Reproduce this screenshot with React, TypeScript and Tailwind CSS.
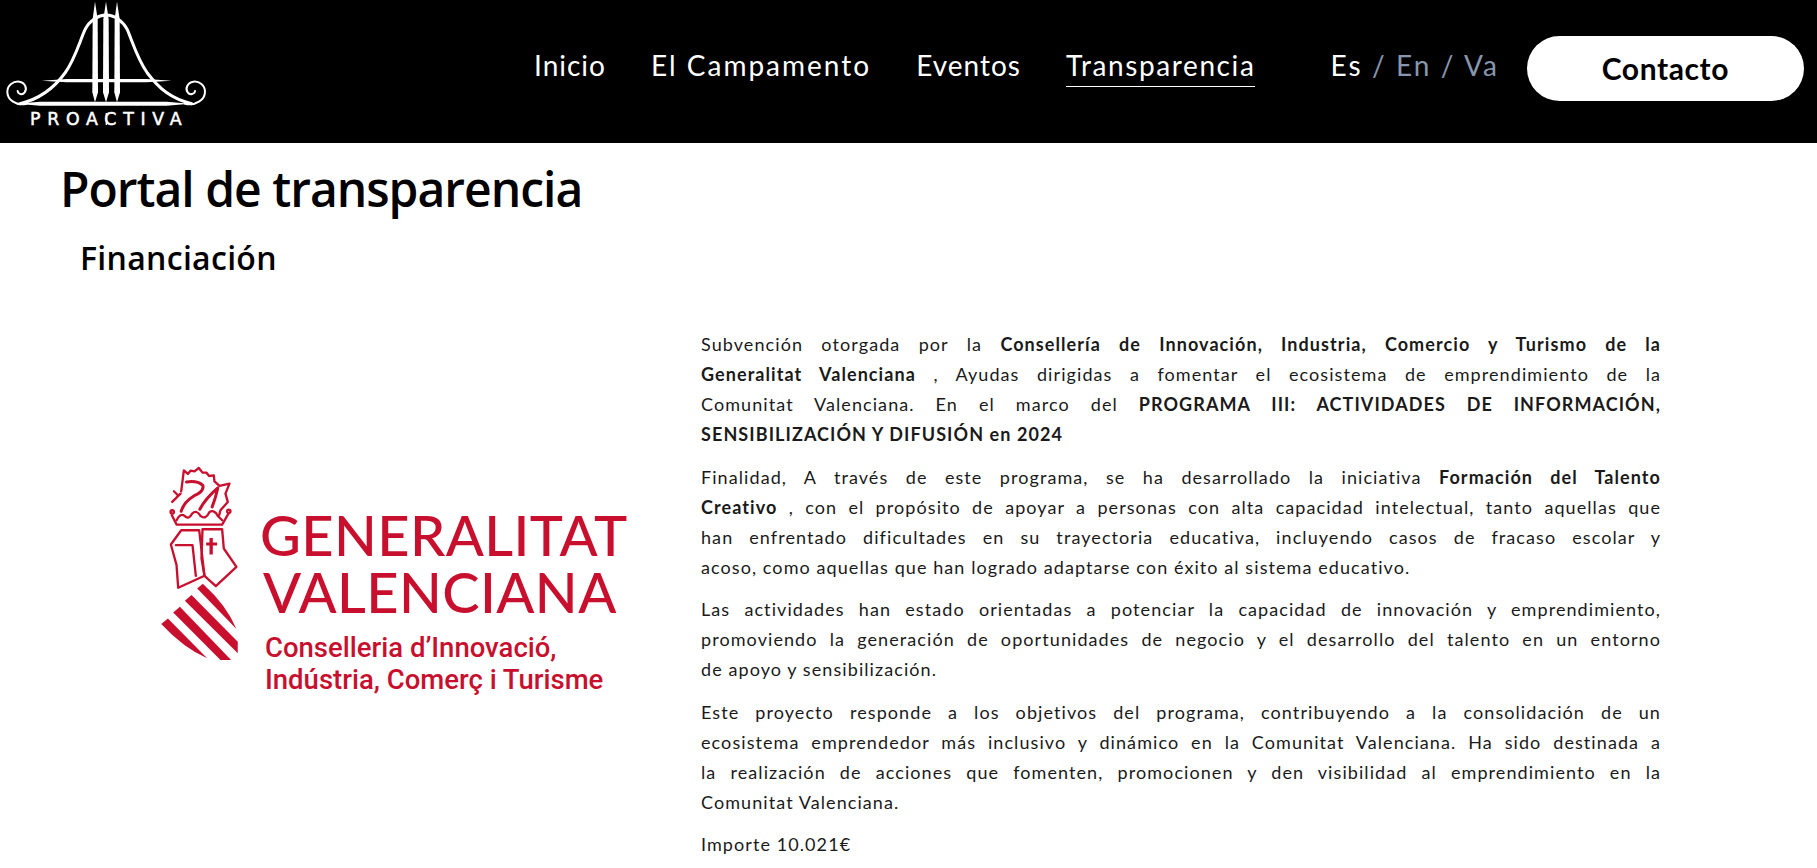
import type { ReactNode } from "react";

const navLinks = [
  { label: "Inicio", tracking: "tracking-[1px]" },
  { label: "El Campamento", tracking: "tracking-[2px]" },
  { label: "Eventos", tracking: "tracking-[1px]" },
];

const Line = ({ children }: { children: ReactNode }) => (
  <span className="block [text-align-last:justify]">{children}</span>
);

const Strong = ({ children }: { children: ReactNode }) => (
  <strong className="font-bold tracking-[0.06em]">{children}</strong>
);

const ProactivaLogo = () => (
  <svg viewBox="0 0 780 435" className="w-[260px] h-[145px] shrink-0">
    <g fill="none" stroke="#fff" strokeLinecap="round">
      <path strokeWidth="9" d="M60 314 C120 300 160 270 195 222 C225 180 238 130 255 92 C268 65 295 48 318 48 C342 48 368 65 382 92 C398 130 412 180 442 222 C478 270 515 300 575 314" />
      <path strokeWidth="6" d="M555 314 C590 322 615 300 615 278 C615 258 598 246 580 248 C562 250 555 270 563 280 C570 290 584 285 585 276" />
      <path strokeWidth="6" d="M80 314 C45 322 22 300 22 278 C22 258 40 246 58 248 C76 250 82 270 74 280 C67 290 54 285 53 276" />
    </g>
    <g fill="#fff">
      <polygon points="125,245 200,240 440,240 515,245 440,250 200,250" />
      <polygon points="50,314 120,308 500,308 570,314 500,320 120,320" />
      <polygon points="285,8 293,60 294,280 285,310 277,280 278,60" />
      <polygon points="318,8 326,60 327,280 318,310 309,280 310,60" />
      <polygon points="351,8 359,60 360,280 351,310 343,280 344,60" />
      <rect x="317" y="342" width="4" height="36" />
      <text x="90" y="378" fontSize="52" textLength="455" stroke="#fff" strokeWidth="1.5" fontFamily="'DejaVu Sans', sans-serif">PROACTIVA</text>
    </g>
  </svg>
);

const GeneralitatCrest = () => (
  <svg viewBox="50 30 260 610" className="w-[87px] h-[203px] shrink-0">
    <g fill="#c8102e">
      <path d="M170 410 L187 396 Q258 460 288 532 Z" />
      <path d="M133 447 L153 430 L292 570 L292 605 Z" />
      <path d="M98 482 L118 465 L272 625 L240 625 Z" />
      <path d="M62 517 L82 500 L200 620 Q130 590 62 517 Z" />
      <path d="M207 258 H217 V272 H230 V281 H217 V308 H207 V281 H197 V272 H207 Z" />
    </g>
    <g fill="none" stroke="#c8102e" strokeWidth="7" strokeLinejoin="round" strokeLinecap="round">
      <path d="M122 235 H176 L192 372 L113 408 L108 340 L91 278 Z" />
      <path d="M106 280 H156 L166 372" />
      <path d="M186 232 H245 L250 290 L288 345 L226 403 L192 372 L183 320 Z" />
      <path d="M108 218 H245 M108 218 L94 190 M245 218 L264 185" />
      <path d="M108 205 Q120 182 132 192 Q145 205 155 185 Q168 172 180 192 Q195 205 207 180 Q222 172 232 192 L245 205" />
      <circle cx="95" cy="180" r="5" />
      <circle cx="265" cy="178" r="5" />
      <path strokeWidth="9" d="M138 90 Q170 85 187 100 Q192 118 160 132 Q130 150 122 178" />
      <path d="M122 118 L130 55 L142 66 L150 56 L162 58 L175 48 L186 62 L198 62 L206 72 L220 70 L222 88 L237 102 L267 95 L255 125 L262 150 L240 175 L236 190" />
      <path strokeWidth="9" d="M178 172 Q195 140 232 108 Q225 140 215 165" />
      <path d="M95 150 L120 125 M112 130 L100 118" />
    </g>
  </svg>
);

const GeneralitatLogo = () => (
  <div className="flex items-start">
    <GeneralitatCrest />
    <div className="ml-[16px] pt-[44px] text-[#c8102e]">
      <div className="font-['Lato',sans-serif] font-medium text-[56px] leading-[57px] tracking-[0.4px]">
        <div>GENERALITAT</div>
        <div className="ml-[3px]">VALENCIANA</div>
      </div>
      <div className="font-['Roboto',sans-serif] font-medium text-[27.5px] leading-[32.5px] mt-[12px] ml-[5px]">
        Conselleria d’Innovació,
        <br />
        Indústria, Comerç i Turisme
      </div>
    </div>
  </div>
);

const App = () => {
  return (
    <div className="min-h-[868px] bg-white overflow-hidden">
      <header className="h-[143px] bg-black flex items-center">
        <ProactivaLogo />
        <nav className="ml-[274px] flex items-center gap-[45px] text-white font-['Lato',sans-serif] text-[28px] mb-[14px]">
          {navLinks.map((link) => (
            <a key={link.label} className={link.tracking}>
              {link.label}
            </a>
          ))}
          <a className="border-b border-white -mb-[1px] tracking-[1.6px]">Transparencia</a>
        </nav>
        <div className="ml-[75px] mb-[14px] text-[28px] tracking-[2.1px] font-['Lato',sans-serif] text-[#8796ad]">
          <span className="text-white">Es</span> / En / Va
        </div>
        <button className="ml-[28px] w-[277px] h-[65px] rounded-full bg-white text-black font-['Lato',sans-serif] font-bold text-[30px] tracking-[0.6px] mt-[-7px]">
          Contacto
        </button>
      </header>

      <main className="pl-[60px] text-black">
        <h1 className="font-['Open_Sans',sans-serif] font-semibold text-[48px] tracking-[-1px] leading-[66px] mt-[13px]">
          Portal de transparencia
        </h1>
        <h2 className="font-['Open_Sans',sans-serif] font-semibold text-[32px] tracking-[0.3px] leading-[44px] pl-[20px] mt-[14px]">
          Financiación
        </h2>

        <div className="flex items-center mt-[49px]">
          <div className="w-[641px] pl-[97px] mb-[30px]">
            <GeneralitatLogo />
          </div>
          <div className="w-[960px] font-['Lato',sans-serif] text-[18px] leading-[30px] tracking-[0.06em] text-[#1a1a1a]">
            <p className="mb-[12.5px]">
              <Line>Subvención otorgada por la <Strong>Consellería de Innovación, Industria, Comercio y Turismo de la</Strong></Line>
              <Line><Strong>Generalitat Valenciana</Strong> , Ayudas dirigidas a fomentar el ecosistema de emprendimiento de la</Line>
              <Line>Comunitat Valenciana. En el marco del <Strong>PROGRAMA III: ACTIVIDADES DE INFORMACIÓN,</Strong></Line>
              <Strong>SENSIBILIZACIÓN Y DIFUSIÓN en 2024</Strong>
            </p>
            <p className="mb-[12.5px]">
              <Line>Finalidad, A través de este programa, se ha desarrollado la iniciativa <Strong>Formación del Talento</Strong></Line>
              <Line><Strong>Creativo</Strong> , con el propósito de apoyar a personas con alta capacidad intelectual, tanto aquellas que</Line>
              <Line>han enfrentado dificultades en su trayectoria educativa, incluyendo casos de fracaso escolar y</Line>
              acoso, como aquellas que han logrado adaptarse con éxito al sistema educativo.
            </p>
            <p className="mb-[12.5px]">
              <Line>Las actividades han estado orientadas a potenciar la capacidad de innovación y emprendimiento,</Line>
              <Line>promoviendo la generación de oportunidades de negocio y el desarrollo del talento en un entorno</Line>
              de apoyo y sensibilización.
            </p>
            <p className="mb-[12.5px]">
              <Line>Este proyecto responde a los objetivos del programa, contribuyendo a la consolidación de un</Line>
              <Line>ecosistema emprendedor más inclusivo y dinámico en la Comunitat Valenciana. Ha sido destinada a</Line>
              <Line>la realización de acciones que fomenten, promocionen y den visibilidad al emprendimiento en la</Line>
              Comunitat Valenciana.
            </p>
            <p>Importe 10.021€</p>
          </div>
        </div>
      </main>
    </div>
  );
};

export default App;
